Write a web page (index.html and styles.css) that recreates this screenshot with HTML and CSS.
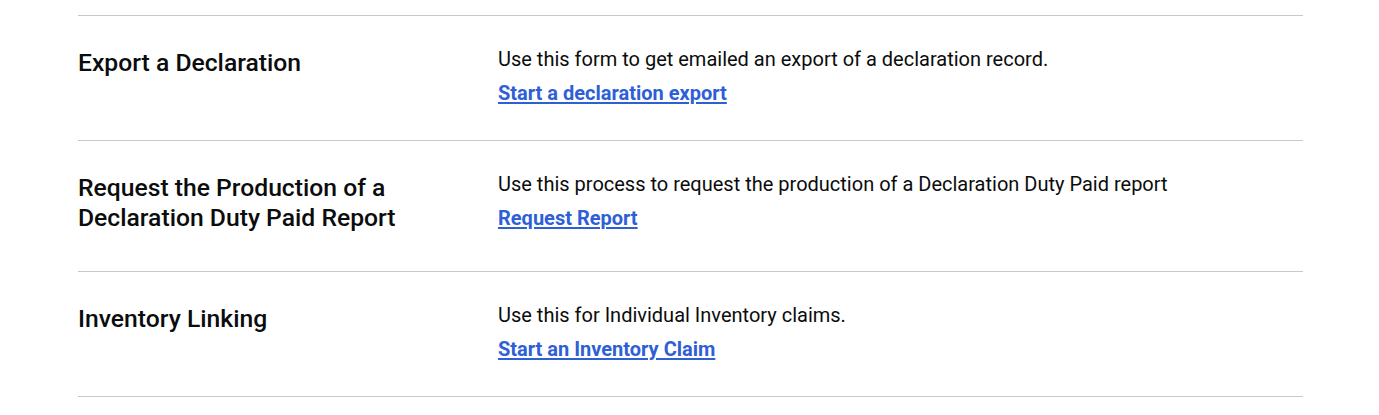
FILE: index.html
```html
<!DOCTYPE html>
<html lang="en">
<head>
<meta charset="utf-8">
<title>Services</title>
<link rel="stylesheet" href="styles.css">
</head>
<body>
<main class="page">
  <section class="row">
    <h2 class="row-title">Export a Declaration</h2>
    <div class="row-body">
      <p class="row-desc">Use this form to get emailed an export of a declaration record.</p>
      <p class="row-link"><a href="#">Start a declaration export</a></p>
    </div>
  </section>
  <section class="row">
    <h2 class="row-title">Request the Production of a Declaration Duty Paid Report</h2>
    <div class="row-body">
      <p class="row-desc">Use this process to request the production of a Declaration Duty Paid report</p>
      <p class="row-link"><a href="#">Request Report</a></p>
    </div>
  </section>
  <section class="row">
    <h2 class="row-title">Inventory Linking</h2>
    <div class="row-body">
      <p class="row-desc">Use this for Individual Inventory claims.</p>
      <p class="row-link"><a href="#">Start an Inventory Claim</a></p>
    </div>
  </section>
</main>
</body>
</html>
```

FILE: styles.css
```css
html, body {
  margin: 0;
  padding: 0;
  background: #ffffff;
}
body {
  font-family: "Roboto", "Liberation Sans", sans-serif;
  color: #0b0c0c;
}
.page {
  width: 1225px;
  margin: 0 0 0 78px;
  padding-top: 15px;
}
.row {
  display: grid;
  grid-template-columns: 420px 1fr;
  align-items: start;
  border-top: 1px solid #c8c8c8;
  padding: 32px 0 20px;
}
.row:last-child {
  border-bottom: 1px solid #c8c8c8;
}
.row-title {
  margin: 0 0 18px;
  font-size: 24.7px;
  line-height: 30px;
  font-weight: 500;
  width: 340px;
}
.row-body {
  margin-top: -1px;
}
.row-desc {
  margin: 0 0 9px;
  font-size: 20px;
  line-height: 25px;
}
.row-link {
  margin: 0 0 14px;
  font-size: 20px;
  line-height: 25px;
  font-weight: 700;
}
.row-link a {
  color: #2f5fd7;
  text-decoration: underline;
  text-underline-offset: 2px;
  text-decoration-thickness: 2px;
}
```
